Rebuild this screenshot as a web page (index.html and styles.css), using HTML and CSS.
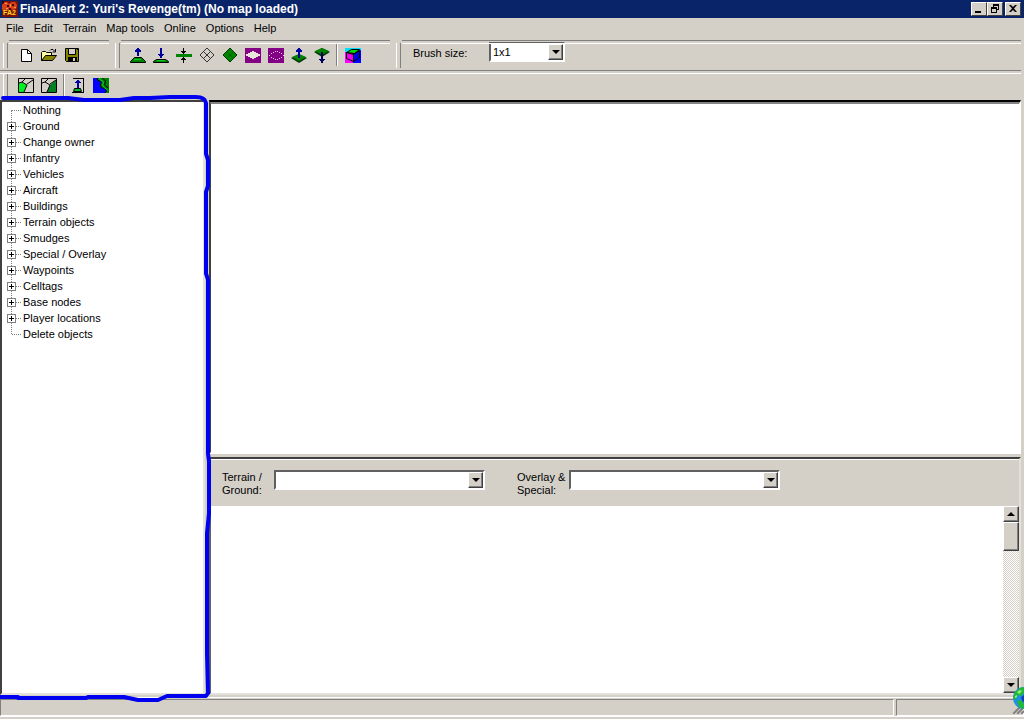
FILE: index.html
```html
<!DOCTYPE html>
<html lang="en">
<head>
    <meta charset="UTF-8">
    <meta name="viewport" content="width=device-width, initial-scale=1.0">
    <title>FinalAlert 2: Yuri's Revenge(tm) (No map loaded)</title>
    <link rel="stylesheet" href="styles.css">
</head>
<body>
    <header class="titleBar">
        <svg class="icon" viewBox="0 0 16 16">
            <path fill="#7a1208" d="M0 0h16v16H0z"/>
            <path fill="#d8401c" d="M2 1h3l2 2 3-2h3l2 3-1 4-3 1-2-1-2 2-3-1-3 1-2-3 1-3z"/>
            <path fill="#3c0804" d="M0 0h3L1 3H0zM5 4h2v2H5zM10 3h2v2h-2zM7 7h2v2H7z"/>
            <path fill="#f0a030" d="M3 2h2v1H3zM8 3h1v3H8zM12 6h2v1h-2zM4 7h2v1H4z"/>
            <text class="iconText" x="1" y="14">FA2</text>
        </svg>
        <h1>FinalAlert 2: Yuri's Revenge(tm) (No map loaded)</h1>
        <div class="windowButtons">
            <button aria-label="Minimize"><svg width="12" height="10" viewBox="0 0 12 10"><path d="M2 7h6v2H2z"/></svg></button>
            <button aria-label="Restore"><svg width="12" height="10" viewBox="0 0 12 10"><path d="M4 0h6v6H8V5h1V2H5v1H4zM2 3h6v6H2zM3 5v3h4V5z" fill-rule="evenodd"/></svg></button>
            <button class="close" aria-label="Close"><svg width="12" height="10" viewBox="0 0 12 10"><path d="M2 1h2l2 2 2-2h2L7 4.500 10 8H8L6 6 4 8H2l3-3.500z"/></svg></button>
        </div>
    </header>

    <nav class="menuBar">
        <button>File</button>
        <button>Edit</button>
        <button>Terrain</button>
        <button>Map tools</button>
        <button>Online</button>
        <button>Options</button>
        <button>Help</button>
    </nav>

    <div class="toolRow">
        <div class="band fileBand">
            <button aria-label="New"><svg class="icon" viewBox="0 0 16 16"><path fill="#fff" stroke="#000" d="M3.500 2.500h6l4 4v8h-10z"/><path fill="none" stroke="#000" d="M9.500 2.500v4h4"/></svg></button>
            <button aria-label="Open"><svg class="icon" viewBox="0 0 16 16"><path fill="#ffffa0" stroke="#000" d="M.5 13.500v-8l1-1h3l1 1h5v3"/><path fill="#848400" stroke="#000" d="M.5 13.500l4-5h11l-4 5z"/><path fill="none" stroke="#000" d="M9 3.500l1-1h2l2 2M14.500 2v3h-3"/></svg></button>
            <button aria-label="Save"><svg class="icon" viewBox="0 0 16 16"><path fill="#848400" stroke="#000" d="M1.500 1.500h13v13h-12l-1-1z"/><path fill="#d4d0c8" stroke="#000" d="M4.500 1.500h7v6h-7z"/><path d="M4 10h9v5H4zM13 2h1v1h-1z"/><path fill="#d4d0c8" d="M9 11h2v3H9z"/></svg></button>
        </div>
        <div class="band terrainBand">
            <button aria-label="Raise ground"><svg class="icon" viewBox="0 0 16 16"><path fill="#008400" stroke="#000" d="M.5 15.500v-1l4-4h7l4 4v1z"/><path fill="#00d020" d="M4 12h7v1H4z"/><path fill="#0000a0" d="M7 1h2v1h1v1h1v2H9v4H7V5H5V3h1V2h1z"/></svg></button>
            <button aria-label="Lower ground"><svg class="icon" viewBox="0 0 16 16"><path fill="#008400" stroke="#000" d="M.5 15.500v-1l3-2h9l3 2v1z"/><path fill="#00d020" d="M4 13h8v1H4z"/><path fill="#0000a0" d="M7 1h2v6h2v1h-1v1H9v2H7V9H6V8H5V7h2z"/></svg></button>
            <button aria-label="Flatten ground"><svg class="icon" viewBox="0 0 16 16"><path fill="#008400" d="M0 7h16v3H0z"/><path d="M7 1h1v3h2v1H9v1H8v1H7V6H6V5H5V4h2zM7 10h1v1h1v1h1v1H8v3H7v-3H5v-1h1v-1h1z"/></svg></button>
            <button aria-label="Hide tileset"><svg class="icon" viewBox="0 0 16 16"><path fill="none" stroke="#333" d="M8 1l7 7-7 7-7-7zM4.500 4.500l7 7M11.500 4.500l-7 7"/></svg></button>
            <button aria-label="Show all fields"><svg class="icon" viewBox="0 0 16 16"><path fill="#008400" stroke="#003800" d="M8 1l7 7-7 7-7-7z"/><path fill="none" stroke="#006800" d="M4.500 4.500l7 7M11.500 4.500l-7 7"/></svg></button>
            <button aria-label="Hide field"><svg class="icon" viewBox="0 0 16 16"><path fill="#840084" d="M0 1h16v15H0z"/><path fill="#e8e4dc" d="M7 4h2v1h2v1h2v1h2v2h-2v1h-2v1H9v1H7v-1H5v-1H3V9H1V7h2V6h2V5h2z"/></svg></button>
            <button aria-label="Show hidden fields"><svg class="icon" viewBox="0 0 16 16"><path fill="#840084" d="M0 1h16v15H0z"/><path fill="#f0d0f0" d="M7 4h1v1H7zM9 4h1v1H9zM5 5h1v1H5zM11 5h1v1h-1zM3 6h1v1H3zM13 6h1v1h-1zM1 8h1v1H1zM15 8h1v1h-1zM3 10h1v1H3zM13 10h1v1h-1zM5 11h1v1H5zM11 11h1v1h-1zM7 12h1v1H7zM9 12h1v1H9z"/></svg></button>
            <button aria-label="Raise tile"><svg class="icon" viewBox="0 0 16 16"><path fill="#003800" d="M0 11l8-4 8 4-8 5z"/><path fill="#008400" d="M1 10l7-3 7 3-7 4z"/><path fill="#0000a0" d="M7 1h2v1h1v1h1v2H9v6H7V5H5V3h1V2h1z"/></svg></button>
            <button aria-label="Lower tile"><svg class="icon" viewBox="0 0 16 16"><path fill="#003800" d="M0 5l8-4 8 4-8 5z"/><path fill="#008400" d="M1 4l7-3 7 3-7 4z"/><path fill="#000060" d="M7 5h2v7h2v1h-1v1H9v2H7v-2H6v-1H5v-1h2z"/></svg></button>
            <span class="separator"></span>
            <button aria-label="3D view"><svg class="icon" viewBox="0 0 16 16"><path fill="#00e0ff" d="M0 1h16v15H0z"/><path fill="#f0f" d="M0 5h8v11H0z"/><path fill="#00f" d="M8 6l8-3v13H8z"/><path fill="#00d800" stroke="#000" d="M1.500 5.500l5-3h8l-5 4z"/><path fill="#f000f0" stroke="#000" d="M1.500 5.500l7 2v7l-7-3z"/><path fill="#0000f0" stroke="#000" d="M8.500 7.500l6-4v7l-6 4z"/></svg></button>
        </div>
        <div class="band brushBand">
            <label for="brushSize">Brush size:</label>
            <div class="combo brushCombo">
                <select id="brushSize"><option>1x1</option><option>2x2</option><option>3x3</option></select>
                <span class="comboArrow"></span>
            </div>
        </div>
    </div>

    <div class="toolRow">
        <div class="band cliffBand">
            <button aria-label="Cliff front"><svg class="icon" viewBox="0 0 16 16"><path fill="#d4d0c8" stroke="#000" d="M.5 1.500h15v14H.5z"/><path fill="#00f020" d="M1 6l2-1 6 3-3 7H1z"/><path fill="none" stroke="#000" d="M1 6l3-1 5 3-3 7M4 5l3-3M9 7l6-4"/></svg></button>
            <button aria-label="Cliff back"><svg class="icon" viewBox="0 0 16 16"><path fill="#d4d0c8" stroke="#000" d="M.5 1.500h15v14H.5z"/><path fill="#008020" d="M9 8l6-5v12H6z"/><path fill="none" stroke="#000" d="M1 6l3-1 5 3-3 7M4 5l3-3M9 7l6-4"/></svg></button>
            <span class="separator"></span>
            <button aria-label="Auto level"><svg class="icon" viewBox="0 0 16 16"><path d="M3 1h11v14h-1V2H3z"/><path fill="#00b820" stroke="#000" d="M4.500 11.500h6l1 3h-8z"/><path d="M2 15h12v1H2z"/><path fill="#0000a0" d="M7 3h2v1h1v1h1v1H9v5H7V6H5V5h1V4h1z"/></svg></button>
            <button aria-label="Auto shore"><svg class="icon" viewBox="0 0 16 16"><path fill="#00f" d="M0 1h16v15H0z"/><path fill="#008400" d="M4 1h12v15h-4l2-2-3-3H8L7 8l1-3-4-2z"/><path fill="none" stroke="#000" d="M4.500 1v2l4 2-1 3 1 3h3l2 3-2 2M9.500 1l3 3-1 4 4 3"/><path fill="none" stroke="#00d040" d="M6.500 1v1l4 3-1 3 1 2 4 3"/></svg></button>
        </div>
    </div>

    <main class="workArea">
        <section class="treePane">
            <ul class="tree">
                <li>Nothing</li>
                <li><button aria-label="Expand Ground"></button>Ground</li>
                <li><button aria-label="Expand Change owner"></button>Change owner</li>
                <li><button aria-label="Expand Infantry"></button>Infantry</li>
                <li><button aria-label="Expand Vehicles"></button>Vehicles</li>
                <li><button aria-label="Expand Aircraft"></button>Aircraft</li>
                <li><button aria-label="Expand Buildings"></button>Buildings</li>
                <li><button aria-label="Expand Terrain objects"></button>Terrain objects</li>
                <li><button aria-label="Expand Smudges"></button>Smudges</li>
                <li><button aria-label="Expand Special / Overlay"></button>Special / Overlay</li>
                <li><button aria-label="Expand Waypoints"></button>Waypoints</li>
                <li><button aria-label="Expand Celltags"></button>Celltags</li>
                <li><button aria-label="Expand Base nodes"></button>Base nodes</li>
                <li><button aria-label="Expand Player locations"></button>Player locations</li>
                <li>Delete objects</li>
            </ul>
            <!-- pen outline round the object list -->
            <svg class="penMark" viewBox="0 0 212 608" preserveAspectRatio="none">
                <path d="M3 4H68L84 6H120L134 4H150L170 3H196Q205 3 206 9V60L208 66V92L206 98V180L208 186V360L209 368V420L207 440V560L208 600L206 603H167L158 607H138L124 604H88L86 605H18V604H0"/>
            </svg>
        </section>
        <section class="mapPane">
            <div class="mapView"></div>
            <div class="tilePane">
                <div class="tileBar">
                    <label for="terrainSelect">Terrain /<br>Ground:</label>
                    <div class="combo tileCombo">
                        <select id="terrainSelect"><option></option></select>
                        <span class="comboArrow"></span>
                    </div>
                    <label for="overlaySelect">Overlay &amp;<br>Special:</label>
                    <div class="combo tileCombo">
                        <select id="overlaySelect"><option></option></select>
                        <span class="comboArrow"></span>
                    </div>
                </div>
                <div class="tileView">
                    <div class="scrollBar">
                        <button class="scrollUp" aria-label="Scroll up"></button>
                        <div class="scrollThumb"></div>
                        <button class="scrollDown" aria-label="Scroll down"></button>
                    </div>
                </div>
            </div>
        </section>
    </main>

    <footer class="statusBar">
        <div class="statusText"></div>
        <div class="statusSide"></div>
        <svg class="globe" width="12" height="28" viewBox="0 0 12 28">
            <path stroke="#fff" d="M0 28L12 16M4 28l8-8M8 28l4-4"/>
            <path stroke="#808080" stroke-width="2" d="M1 28l11-11M5 28l7-7M9 28l3-3"/>
            <circle cx="12" cy="12" r="11" fill="#2090e0"/>
            <path fill="#20b838" d="M3 6l5-4 4-1v6l-3 3-3-1-3 5-2-2zM5 15l4-1 3 4v5l-5-2z"/>
            <path fill="#90f070" d="M5 6l3-2 2 1-3 3zM3 10l2-1v2l-2 1z"/>
            <path fill="#1040c0" d="M9 11l3-2v7l-2-1z"/>
        </svg>
    </footer>
</body>
</html>
```

FILE: styles.css
```css
* {
    margin: 0;
    padding: 0;
    box-sizing: border-box;
}
body {
    display: flex;
    flex-direction: column;
    height: 100vh;
    overflow: hidden;
    background-color: #d4d0c8;
    color: black;
    font-family: "Liberation Sans", Arial, sans-serif;
    font-size: 11px;
    line-height: 13px;
}
button, select {
    border: none;
    background: none;
    color: inherit;
    font: inherit;
}
svg {
    display: block;
}
.icon {
    width: 16px;
    height: 16px;
}

/* title and menu */
.titleBar {
    display: flex;
    align-items: center;
    flex: none;
    height: 18px;
    padding: 0 3px 0 2px;
    background-color: #0a246a;
    color: white;
}
.titleBar h1 {
    flex: 1;
    margin-left: 2px;
    font-size: 12px;
    font-weight: bold;
}
.iconText {
    fill: #ffd820;
    font-size: 7px;
    font-weight: bold;
}
.windowButtons {
    display: flex;
}
.windowButtons button {
    width: 16px;
    height: 14px;
    padding: 1px;
    background-color: #d4d0c8;
    border: 1px solid;
    border-color: white #404040 #404040 white;
}
.windowButtons .close {
    margin-left: 2px;
}
.menuBar {
    display: flex;
    flex: none;
    align-items: center;
    height: 22px;
    padding: 0 0 2px 1px;
}
.menuBar button {
    padding: 0 5px;
}

/* toolbars */
.toolRow {
    display: flex;
    flex: none;
    height: 30px;
}
.band {
    position: relative;
    display: flex;
    align-items: center;
    padding-left: 14px;
}
.band::before {
    content: "";
    position: absolute;
    left: 3px;
    top: 3px;
    bottom: 2px;
    width: 3px;
    border-left: 1px solid white;
    border-right: 1px solid #808080;
}
.band::after {
    content: "";
    position: absolute;
    left: 9px;
    right: 3px;
    top: 0;
    height: 2px;
    border-top: 1px solid #808080;
    border-bottom: 1px solid white;
}
.band button {
    display: flex;
    justify-content: center;
    width: 23px;
}
.fileBand {
    width: 112px;
}
.terrainBand {
    width: 281px;
}
.brushBand {
    flex: 1;
    padding: 0 0 6px 20px;
}
.brushBand label {
    width: 76px;
    padding-top: 3px;
}
.cliffBand {
    flex: 1;
}
.cliffBand::after {
    left: 0;
}
.separator {
    width: 2px;
    height: 22px;
    margin: 0 3px;
    border-left: 1px solid #808080;
    border-right: 1px solid white;
}
.cliffBand .separator {
    margin: 0 1px 0 3px;
}
.combo {
    position: relative;
    height: 20px;
    border: 2px solid;
    border-color: #606060 white white #606060;
    background-color: white;
}
.combo select {
    display: block;
    width: 100%;
    height: 100%;
    padding-left: 2px;
    appearance: none;
}
.brushCombo {
    width: 76px;
}
.comboArrow {
    position: absolute;
    top: 0;
    right: 0;
    width: 15px;
    height: 16px;
    pointer-events: none;
}
.comboArrow, .scrollUp, .scrollDown, .scrollThumb {
    display: flex;
    align-items: center;
    justify-content: center;
    background-color: #d4d0c8;
    border: 1px solid;
    border-color: white #404040 #404040 white;
    box-shadow: inset -1px -1px #808080;
}
.comboArrow::after, .scrollUp::after, .scrollDown::after {
    content: "";
    border: 4px solid transparent;
    border-top-color: black;
    border-bottom: none;
}
.scrollUp::after {
    border-top: none;
    border-bottom: 4px solid black;
}

/* work area */
.workArea {
    display: flex;
    flex: 1;
    min-height: 0;
    padding: 0 3px 2px 0;
}
.treePane {
    position: relative;
    flex: none;
    width: 205px;
    margin-right: 4px;
    border: 2px solid;
    border-color: #404040 #e4e1dc #e4e1dc #404040;
    background-color: white;
}
.tree {
    position: relative;
    list-style: none;
}
.tree::before {
    content: "";
    position: absolute;
    left: 9px;
    top: 8px;
    bottom: 8px;
    border-left: 1px dotted #808080;
}
.tree li {
    position: relative;
    display: flex;
    align-items: center;
    height: 16px;
    padding-left: 21px;
}
.tree li::before {
    content: "";
    position: absolute;
    left: 10px;
    top: 8px;
    width: 9px;
    border-top: 1px dotted #808080;
}
.tree button {
    position: absolute;
    left: 5px;
    top: 4px;
    width: 9px;
    height: 9px;
    border: 1px solid #808080;
    background:
        linear-gradient(black, black) center / 5px 1px no-repeat,
        linear-gradient(black, black) center / 1px 5px no-repeat,
        white;
}
.penMark {
    position: absolute;
    z-index: 1;
    left: -2px;
    top: -8px;
    width: 212px;
    height: calc(100% + 16px);
    fill: none;
    stroke: #0000f0;
    stroke-width: 4px;
    stroke-linejoin: round;
    stroke-linecap: round;
    overflow: visible;
    pointer-events: none;
}
.mapPane {
    display: flex;
    flex: 1;
    flex-direction: column;
    gap: 3px;
}
.mapView {
    flex: 1;
    border: 2px solid;
    border-top-width: 4px;
    border-top-style: groove;
    border-color: #303030 white white #404040;
    background-color: white;
}
.tilePane {
    display: flex;
    flex-direction: column;
    height: 238px;
    border: 2px solid;
    border-color: #404040 #e4e1dc #e4e1dc #606060;
}
.tileBar {
    display: flex;
    height: 47px;
    padding: 10px 11px;
    border-top: 1px solid white;
}
.tileBar label {
    width: 52px;
    padding-top: 1px;
}
.tileCombo {
    width: 211px;
    margin-right: 32px;
}
.tileView {
    display: flex;
    flex: 1;
    justify-content: flex-end;
    background-color: white;
}
.scrollBar {
    display: flex;
    flex-direction: column;
    width: 16px;
    background: repeating-conic-gradient(#d4d0c8 0 25%, white 0 50%) 0 0 / 2px 2px;
}
.scrollUp, .scrollDown {
    width: 16px;
    height: 16px;
}
.scrollThumb {
    height: 29px;
}
.scrollDown {
    margin-top: auto;
}

/* status bar */
.statusBar {
    position: relative;
    display: flex;
    flex: none;
    gap: 2px;
    height: 22px;
    padding: 1px 0 3px;
    border-top: 1px solid white;
}
.statusBar::after {
    content: "";
    position: absolute;
    left: 0;
    right: 0;
    bottom: 2px;
    border-top: 1px solid white;
}
.statusText, .statusSide {
    border: 1px solid;
    border-color: #808080 white white #808080;
}
.statusText {
    flex: 1;
}
.statusSide {
    width: 128px;
}
.globe {
    position: absolute;
    right: 0;
    bottom: 5px;
}
```
